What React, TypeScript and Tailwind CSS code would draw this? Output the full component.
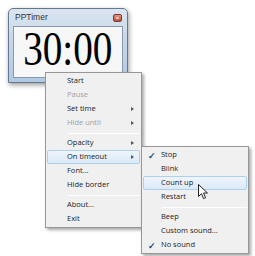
import React from "react";

type Item =
  | { sep: true }
  | { label: string; disabled?: boolean; arrow?: boolean; checked?: boolean; active?: boolean };

const mainMenu: Item[] = [
  { label: "Start" },
  { label: "Pause", disabled: true },
  { label: "Set time", arrow: true },
  { label: "Hide until", disabled: true, arrow: true },
  { sep: true },
  { label: "Opacity", arrow: true },
  { label: "On timeout", arrow: true, active: true },
  { label: "Font..." },
  { label: "Hide border" },
  { sep: true },
  { label: "About..." },
  { label: "Exit" },
];

const timeoutMenu: Item[] = [
  { label: "Stop", checked: true },
  { label: "Blink" },
  { label: "Count up", active: true },
  { label: "Restart" },
  { sep: true },
  { label: "Beep" },
  { label: "Custom sound..." },
  { label: "No sound", checked: true },
];

function Menu({ items, gutter }: { items: Item[]; gutter: number }) {
  return (
    <div className="bg-[#f0f0f0] border border-[#979797] p-[1px] shadow-[2px_2px_3px_rgba(0,0,0,0.35)]">
      {items.map((it, i) =>
        "sep" in it ? (
          <div key={i} className="h-[6px] flex items-center" style={{ paddingLeft: gutter }}>
            <div className="h-px w-full bg-[#d7d7d7] border-b border-white" />
          </div>
        ) : (
          <div
            key={i}
            className={
              "relative h-[14px] flex items-center rounded-[2px] " +
              (it.active
                ? "bg-gradient-to-b from-[#eef5fc] to-[#dbe9f8] border border-[#aed0ec]"
                : "border border-transparent")
            }
          >
            <span className="w-[15px] flex justify-center text-[#24448a] text-[9px] font-bold leading-none">
              {it.checked ? "✓" : ""}
            </span>
            <span
              className={"flex-1 leading-none " + (it.disabled ? "text-[#a0a0a0]" : "text-[#1b1b1b]")}
              style={{ paddingLeft: gutter - 17 }}
            >
              {it.label}
            </span>
            {it.arrow && (
              <span className="mr-[5px] w-0 h-0 border-y-[2.5px] border-y-transparent border-l-[3px] border-l-[#555]" />
            )}
          </div>
        )
      )}
    </div>
  );
}

export default function App() {
  return (
    <div
      className="relative w-[255px] h-[256px] bg-white overflow-hidden text-[7.5px]"
      style={{ fontFamily: "'Open Sans', 'Noto Sans', sans-serif" }}
    >
      {/* timer window */}
      <div className="absolute left-[8px] top-[8px] w-[120px] h-[75px] rounded-t-[5px] border border-[#64788f] bg-gradient-to-b from-[#dbe5f0] via-[#c4d5e8] to-[#b2c9e2] shadow-[1px_2px_5px_rgba(0,0,0,0.4)] flex flex-col px-[4px] pb-[4px]">
        <div className="h-[17px] flex items-center justify-between">
          <span className="pl-[2px] text-[8.5px] text-[#333]" style={{ fontFamily: "'Liberation Sans', Arial, sans-serif" }}>
            PPTimer
          </span>
          <span className="w-[9px] h-[8px] mr-[1px] rounded-[2px] bg-gradient-to-b from-[#e0927f] to-[#c04a35] border border-[#7d3a2f] flex items-center justify-center text-white text-[6px] font-bold leading-none">
            ×
          </span>
        </div>
        <div className="flex-1 bg-[#f7f7f7] border border-[#8699b0] flex justify-center">
          <span
            className="text-[49px] leading-[44px] scale-x-[0.8] text-black"
            style={{ fontFamily: "'Liberation Serif', 'Times New Roman', serif" }}
          >
            30:00
          </span>
        </div>
      </div>

      {/* context menu */}
      <div className="absolute left-[45px] top-[72px] w-[97px]">
        <Menu items={mainMenu} gutter={21} />
      </div>

      {/* submenu */}
      <div className="absolute left-[141px] top-[146px] w-[108px]">
        <Menu items={timeoutMenu} gutter={19} />
      </div>

      {/* mouse cursor */}
      <svg className="absolute left-[198px] top-[184px]" width="11" height="16" viewBox="0 0 11 16">
        <path d="M0.5 0.5 L0.5 12.5 L3.5 9.7 L5.6 14.6 L7.6 13.7 L5.5 9 L9.5 9 Z" fill="white" stroke="#222" strokeWidth="1" strokeLinejoin="round" />
      </svg>
    </div>
  );
}
